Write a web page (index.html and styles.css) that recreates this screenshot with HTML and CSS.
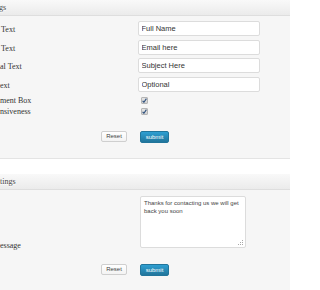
FILE: index.html
```html
<!DOCTYPE html>
<html>
<head>
<meta charset="utf-8">
<link rel="stylesheet" href="styles.css">
</head>
<body>
<div class="panel">
  <div class="panel-head"><span class="head-title head-first">gs</span></div>
  <div class="panel-body body-first">
    <div class="form-grid">
      <span class="lbl lbl-field">Text</span>
      <span class="fld"><input class="txt" type="text" value="Full Name"></span>
      <span class="lbl lbl-field">Text</span>
      <span class="fld"><input class="txt" type="text" value="Email here"></span>
      <span class="lbl lbl-field lbl-edge">al Text</span>
      <span class="fld"><input class="txt" type="text" value="Subject Here"></span>
      <span class="lbl lbl-field lbl-edge">ext</span>
      <span class="fld"><input class="txt" type="text" value="Optional"></span>
      <span class="lbl lbl-check lbl-edge">ment Box</span>
      <span class="fld fld-check"><span class="cbox"><svg viewBox="0 0 7 7" width="7" height="7"><path d="M1.6 3.8 L2.9 5.2 L5.4 1.6" fill="none" stroke="#2d4f7c" stroke-width="1.1"/></svg></span></span>
      <span class="lbl lbl-check lbl-edge">nsiveness</span>
      <span class="fld fld-check"><span class="cbox"><svg viewBox="0 0 7 7" width="7" height="7"><path d="M1.6 3.8 L2.9 5.2 L5.4 1.6" fill="none" stroke="#2d4f7c" stroke-width="1.1"/></svg></span></span>
      <span class="act act-reset"><button class="btn btn-reset" type="button">Reset</button></span>
      <span class="act act-submit"><button class="btn btn-submit" type="button">submit</button></span>
    </div>
  </div>
</div>
<div class="panel panel-second">
  <div class="panel-head"><span class="head-title">tings</span></div>
  <div class="panel-body body-second">
    <div class="form-grid">
      <span class="lbl lbl-msg lbl-edge">essage</span>
      <span class="fld fld-area">
        <span class="area-wrap">
          <textarea class="area">Thanks for contacting us we will get back you soon</textarea>
          <svg class="grip" viewBox="0 0 6 6" width="6" height="6"><g fill="#a8a8a8"><rect x="4" y="0" width="1" height="1"/><rect x="2" y="2" width="1" height="1"/><rect x="4" y="2" width="1" height="1"/><rect x="0" y="4" width="1" height="1"/><rect x="2" y="4" width="1" height="1"/><rect x="4" y="4" width="1" height="1"/></g></svg>
        </span>
      </span>
      <span class="act act-reset act-second"><button class="btn btn-reset" type="button">Reset</button></span>
      <span class="act act-submit act-second"><button class="btn btn-submit" type="button">submit</button></span>
    </div>
  </div>
</div>
</body>
</html>
```
FILE: styles.css
```css
html, body {
  margin: 0;
  padding: 0;
}
body {
  background: #ffffff;
  font-family: "Liberation Serif", "Times New Roman", serif;
  color: #333333;
  width: 290px;
  height: 290px;
  overflow: hidden;
}
.panel {
  background: #f6f6f6;
  border-bottom: 1px solid #e4e4e4;
}
.panel-second {
  margin-top: 15px;
  border-bottom: none;
  min-height: 118px;
}
.panel-head {
  height: 16px;
  box-sizing: border-box;
  border-bottom: 1px solid #dedede;
  background: linear-gradient(#f9f9f9, #ebebeb);
  font-size: 8px;
  line-height: 15px;
  color: #464646;
  text-shadow: 0 1px 0 #ffffff;
}
.head-title {
  display: block;
  padding-left: 0;
}
.head-first {
  margin-left: -1px;
}
.body-first {
  padding: 5px 0 15px 0;
}
.body-second {
  padding: 6px 0 20px 0;
}
.form-grid {
  display: grid;
  grid-template-columns: 138px 122px;
}
.lbl {
  font-size: 8px;
  line-height: 9px;
  color: #333333;
  padding-left: 1px;
  white-space: nowrap;
}
.lbl-edge {
  padding-left: 0;
}
.lbl-field {
  align-self: start;
  margin-top: 4px;
}
.lbl-check {
  height: 11px;
  line-height: 11px;
  align-self: center;
}
.lbl-msg {
  align-self: end;
  margin-bottom: -2.5px;
}
.fld {
  display: flex;
  align-items: center;
}
.fld-check {
  height: 11px;
  padding-left: 3px;
}
.fld-area {
  padding-left: 2px;
}
.txt {
  box-sizing: border-box;
  width: 122px;
  height: 15px;
  margin: 0 0 3.5px -0.5px;
  padding: 0 3px;
  border: 1px solid #dcdcdc;
  border-radius: 2px;
  background: #ffffff;
  font-family: "Liberation Sans", Arial, sans-serif;
  font-size: 7.5px;
  color: #333333;
  outline: none;
}
.cbox {
  display: flex;
  width: 7px;
  height: 7px;
  box-sizing: border-box;
  border: 1px solid #b5b5b5;
  border-radius: 1px;
  background: linear-gradient(#e4e4e4, #d2d2d2);
  align-items: center;
  justify-content: center;
  overflow: hidden;
}
.cbox svg {
  display: block;
  flex: none;
}
.area-wrap {
  position: relative;
  display: block;
  width: 106px;
  height: 52px;
}
.area {
  display: block;
  box-sizing: border-box;
  width: 106px;
  height: 52px;
  margin: 0;
  padding: 2px 3px;
  border: 1px solid #dcdcdc;
  border-radius: 2px;
  background: #ffffff;
  font-family: "Liberation Sans", Arial, sans-serif;
  font-size: 6px;
  line-height: 8px;
  color: #444444;
  resize: none;
  overflow: hidden;
  outline: none;
}
.grip {
  position: absolute;
  right: 2px;
  bottom: 2px;
  display: block;
}
.act {
  display: flex;
  align-items: center;
  height: 12px;
  margin-top: 13.5px;
}
.act-second {
  margin-top: 16px;
}
.act-reset {
  justify-content: flex-end;
  padding-right: 11px;
}
.act-submit {
  padding-left: 2px;
}
.btn {
  box-sizing: border-box;
  margin: 0;
  padding: 0;
  font-family: "Liberation Sans", Arial, sans-serif;
  font-size: 6px;
  border-radius: 2px;
  cursor: pointer;
}
.btn-reset {
  width: 26px;
  height: 11px;
  line-height: 9px;
  border: 1px solid #cfcfcf;
  background: linear-gradient(#ffffff, #f3f3f3);
  color: #444444;
}
.btn-submit {
  width: 29px;
  height: 12px;
  line-height: 10px;
  border: 1px solid #21759b;
  background: linear-gradient(#2e9fd2, #21759b);
  color: #ffffff;
}
```
